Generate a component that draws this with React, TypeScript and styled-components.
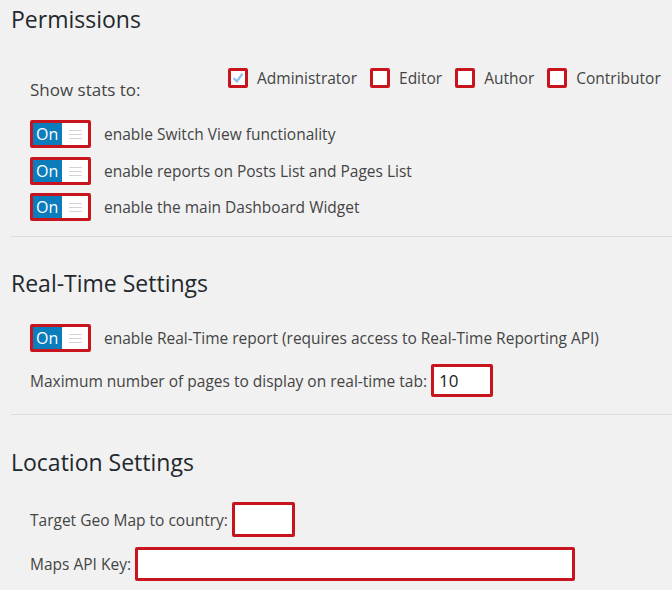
import React from 'react'
import styled, { createGlobalStyle } from 'styled-components'

const GlobalStyle = createGlobalStyle`
  html, body {
    margin: 0;
    padding: 0;
    background: #f1f1f1;
  }
  body {
    font-family: 'Open Sans', 'Noto Sans', sans-serif;
    color: #444;
  }
`

const Page = styled.div`
  width: 672px;
  height: 590px;
  overflow: hidden;
  padding-left: 11px;
  box-sizing: border-box;
`

const Section = styled.div<{ $top: number }>`
  padding-top: ${(p) => p.$top}px;
`

const Heading = styled.h2`
  margin: 0;
  font-size: 23px;
  font-weight: 400;
  color: #23282d;
  line-height: 30px;
`

const Divider = styled.hr`
  border: 0;
  border-top: 1px solid #ddd;
  margin: 0;
`

const Body = styled.div<{ $top: number; $bottom: number }>`
  padding: ${(p) => p.$top}px 0 ${(p) => p.$bottom}px 19px;
  display: flex;
  flex-direction: column;
`

const StatsRow = styled.div`
  display: flex;
  align-items: flex-start;
  height: 54px;
`

const StatsLabel = styled.div`
  font-size: 17px;
  line-height: 23px;
  width: 198px;
  padding-top: 12px;
`

const RoleList = styled.div`
  display: flex;
  align-items: center;
  gap: 13px;
  padding-top: 1px;
`

const Role = styled.label`
  display: flex;
  align-items: center;
  gap: 9px;
  font-size: 15.5px;
`

const Check = styled.span`
  width: 14px;
  height: 14px;
  border: 3px solid #c8141c;
  border-radius: 2px;
  background: #fff;
  display: inline-flex;
  align-items: center;
  justify-content: center;
`

const ToggleRow = styled.div<{ $gap: number }>`
  display: flex;
  align-items: center;
  gap: 13px;
  height: 28px;
  margin-bottom: ${(p) => p.$gap}px;
  font-size: 15.5px;
`

const Toggle = styled.span`
  display: flex;
  width: 55px;
  height: 22px;
  border: 3px solid #c8141c;
  border-radius: 2px;
  background: #fff;
`

const ToggleOn = styled.span`
  width: 29px;
  background: #0b7cbc;
  color: #fff;
  font-size: 16px;
  line-height: 22px;
  padding-left: 3px;
  box-sizing: border-box;
`

const ToggleHandle = styled.span`
  flex: 1;
  display: flex;
  flex-direction: column;
  justify-content: center;
  gap: 3px;
  padding: 0 6px 0 7px;
`

const HandleLine = styled.span`
  height: 1px;
  background: #d4d4d4;
`

const FieldRow = styled.div<{ $gap: number }>`
  display: flex;
  align-items: center;
  gap: 4px;
  font-size: 15.5px;
  margin-bottom: ${(p) => p.$gap}px;
`

const TextBox = styled.div<{ $w: number; $h: number }>`
  width: ${(p) => p.$w}px;
  height: ${(p) => p.$h}px;
  border: 3px solid #c8141c;
  border-radius: 2px;
  background: #fff;
  box-sizing: border-box;
  font-size: 17px;
  color: #222;
  padding-left: 5px;
  display: flex;
  align-items: center;
`

const roles = [
  { name: 'Administrator', on: true },
  { name: 'Editor', on: false },
  { name: 'Author', on: false },
  { name: 'Contributor', on: false },
]

const SwitchItem: React.FC<{ text: string; gap: number }> = ({ text, gap }) => (
  <ToggleRow $gap={gap}>
    <Toggle>
      <ToggleOn>On</ToggleOn>
      <ToggleHandle>
        <HandleLine />
        <HandleLine />
        <HandleLine />
      </ToggleHandle>
    </Toggle>
    <span>{text}</span>
  </ToggleRow>
)

const App: React.FC = () => {
  return (
    <Page>
      <GlobalStyle />
      <Section $top={4}>
        <Heading>Permissions</Heading>
        <Body $top={32} $bottom={15}>
          <StatsRow>
            <StatsLabel>Show stats to:</StatsLabel>
            <RoleList>
              {roles.map((r) => (
                <Role key={r.name}>
                  <Check>
                    {r.on && (
                      <svg width="12" height="12" viewBox="0 0 12 12">
                        <path d="M1.5 6 L4.8 9.5 L10.5 1.8" stroke="#8cc4e8" strokeWidth="2.4" fill="none" />
                      </svg>
                    )}
                  </Check>
                  {r.name}
                </Role>
              ))}
            </RoleList>
          </StatsRow>
          <SwitchItem text="enable Switch View functionality" gap={9} />
          <SwitchItem text="enable reports on Posts List and Pages List" gap={8} />
          <SwitchItem text="enable the main Dashboard Widget" gap={0} />
        </Body>
      </Section>
      <Divider />
      <Section $top={31}>
        <Heading>Real-Time Settings</Heading>
        <Body $top={26} $bottom={17}>
          <SwitchItem text="enable Real-Time report (requires access to Real-Time Reporting API)" gap={12} />
          <FieldRow $gap={0}>
            Maximum number of pages to display on real-time tab:
            <TextBox $w={62} $h={33}>10</TextBox>
          </FieldRow>
        </Body>
      </Section>
      <Divider />
      <Section $top={32}>
        <Heading>Location Settings</Heading>
        <Body $top={25} $bottom={0}>
          <FieldRow $gap={10}>
            Target Geo Map to country:
            <TextBox $w={63} $h={35} />
          </FieldRow>
          <FieldRow $gap={0}>
            Maps API Key:
            <TextBox $w={440} $h={34} />
          </FieldRow>
        </Body>
      </Section>
    </Page>
  )
}

export default App
